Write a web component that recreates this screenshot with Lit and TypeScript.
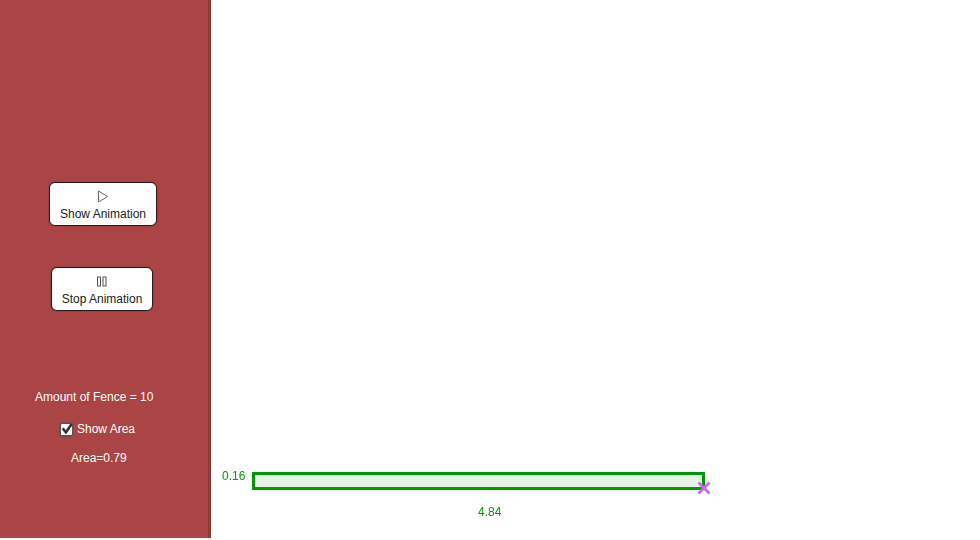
import { LitElement, html, css } from "lit";
import { customElement } from "lit/decorators.js";

@customElement("app-root")
export class AppRoot extends LitElement {
  static styles = css`
    :host {
      display: block;
      width: 980px;
      height: 540px;
      background: #fff;
      font-family: "Liberation Sans", Arial, sans-serif;
      font-size: 12px;
    }
    .app {
      display: flex;
      width: 980px;
      height: 538px;
    }
    .side {
      box-sizing: border-box;
      width: 211px;
      height: 538px;
      flex: none;
      background: #ab4444;
      border-right: 3px solid #933838;
      display: flex;
      flex-direction: column;
      color: #fff;
      padding-top: 182px;
      will-change: opacity;
    }
    .btn {
      box-sizing: border-box;
      height: 44px;
      background: #fff;
      border: 1px solid #2a1c1c;
      box-shadow: 0 0 1px #2a1c1c;
      border-radius: 6px;
      display: flex;
      flex-direction: column;
      align-items: center;
      color: #222;
      padding: 7px 0 0;
      line-height: 14px;
      gap: 4px;
    }
    .btn svg { display: block; }
    .show { width: 108px; margin-left: 49px; }
    .stop { width: 102px; margin-left: 51px; margin-top: 41px; }
    .fence { margin-top: 79px; margin-left: 35px; line-height: 14px; }
    .check {
      display: flex;
      align-items: center;
      margin-top: 18px;
      margin-left: 60px;
      gap: 4px;
      line-height: 14px;
    }
    .check input {
      appearance: none;
      box-sizing: border-box;
      position: relative;
      width: 13px;
      height: 13px;
      margin: 0;
      background: #fff;
      border: 1px solid #555;
      box-shadow: 0 0 0 0.5px #555;
      border-radius: 2px;
    }
    .check input:checked::after {
      content: "";
      position: absolute;
      inset: -1px;
      background: #333;
      clip-path: polygon(12% 50%, 30% 38%, 44% 60%, 82% 5%, 98% 18%, 46% 92%);
    }
    .area { margin-top: 15px; margin-left: 71px; line-height: 14px; }
    .canvas { position: relative; flex: 1; }
    .rect {
      position: absolute;
      box-sizing: border-box;
      left: 41px;
      top: 472px;
      width: 453px;
      height: 18px;
      border: 3px solid #009900;
      background: #e5f4e5;
    }
    .lbl { position: absolute; color: #009900; line-height: 14px; will-change: opacity; }
    .h { left: 11px; top: 469px; }
    .w { left: 267px; top: 505px; }
    .cross { position: absolute; left: 486px; top: 481px; }
  `;

  render() {
    return html`
      <div class="app">
        <aside class="side">
          <div class="btn show">
            <svg width="12" height="13" viewBox="0 0 12 13">
              <path d="M1.5 1 L10.5 6.5 L1.5 12 Z" fill="#fff" stroke="#666" stroke-width="1" />
            </svg>
            <span>Show Animation</span>
          </div>
          <div class="btn stop">
            <svg width="12" height="13" viewBox="0 0 12 13">
              <rect x="1.5" y="2" width="3" height="9" fill="#fff" stroke="#555" stroke-width="1" />
              <rect x="7" y="2" width="3" height="9" fill="#fff" stroke="#555" stroke-width="1" />
            </svg>
            <span>Stop Animation</span>
          </div>
          <div class="fence">Amount of Fence = 10</div>
          <label class="check"><input type="checkbox" checked /><span>Show Area</span></label>
          <div class="area">Area=0.79</div>
        </aside>
        <main class="canvas">
          <div class="rect"></div>
          <span class="lbl h">0.16</span>
          <span class="lbl w">4.84</span>
          <svg class="cross" width="14" height="14" viewBox="0 0 14 14">
            <path d="M1.5 1.5 L12.5 12.5 M12.5 1.5 L1.5 12.5" stroke="#cc66ee" stroke-width="2.8" fill="none" />
          </svg>
        </main>
      </div>
    `;
  }
}
